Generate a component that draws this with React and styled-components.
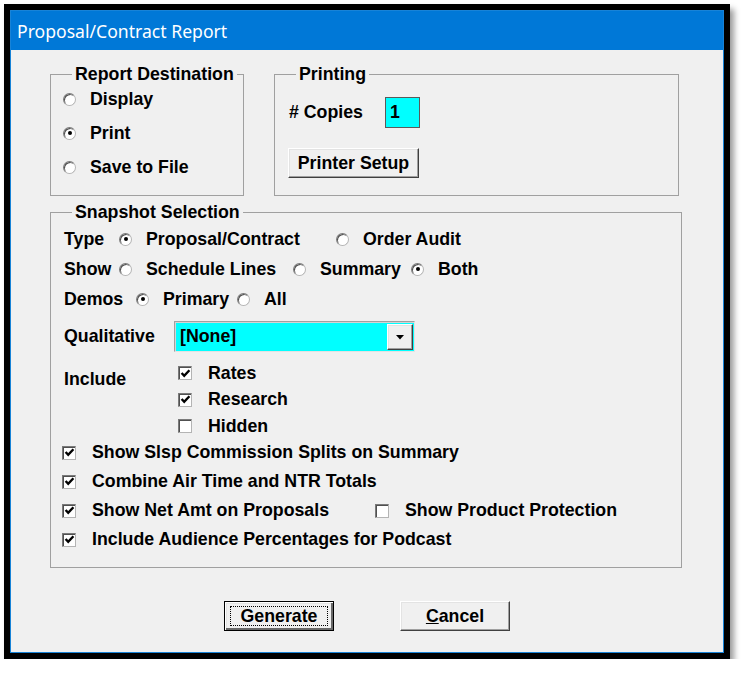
import React from 'react';
import styled, { createGlobalStyle, css } from 'styled-components';

const GlobalStyle = createGlobalStyle`
  body {
    margin: 0;
    background: #fff;
    font-family: "Liberation Sans", Arial, sans-serif;
  }
`;

const raised = css`
  box-sizing: border-box;
  background: #f0f0f0;
  border: 1px solid;
  border-color: #fff #404040 #404040 #fff;
  box-shadow: inset -1px -1px 0 #a0a0a0, inset 1px 1px 0 #e3e3e3;
`;

const sunken = css`
  box-sizing: border-box;
  border: 1px solid;
  border-color: #7a7a7a #b4b4b4 #b4b4b4 #7a7a7a;
  box-shadow: inset 1px 1px 0 #505050;
`;

export default function App () {
  return (
    <>
      <GlobalStyle />
      <Frame>
        <Window>
          <TitleBar>Proposal/Contract Report</TitleBar>
          <Content>
            <TopRow>
              <Group $width={194}>
                <Legend>Report Destination</Legend>
                <Stack $gap={4}>
                  <RadioOption label="Display" />
                  <RadioOption label="Print" checked />
                  <RadioOption label="Save to File" />
                </Stack>
              </Group>
              <Group $width={405}>
                <Legend>Printing</Legend>
                <CopiesRow>
                  <Label $width={98}>#&nbsp;Copies</Label>
                  <CopiesBox>1</CopiesBox>
                </CopiesRow>
                <PrinterButton>Printer Setup</PrinterButton>
              </Group>
            </TopRow>

            <Snapshot $width={632}>
              <Legend $offset={10}>Snapshot Selection</Legend>
              <Row $h={30} $top={2}>
                <Label $width={57}>Type</Label>
                <RadioOption label="Proposal/Contract" checked width={217} />
                <RadioOption label="Order Audit" />
              </Row>
              <Row $h={30}>
                <Label $width={57}>Show</Label>
                <RadioOption label="Schedule Lines" width={174} />
                <RadioOption label="Summary" width={118} />
                <RadioOption label="Both" checked />
              </Row>
              <Row $h={30}>
                <Label $width={74}>Demos</Label>
                <RadioOption label="Primary" checked width={101} />
                <RadioOption label="All" />
              </Row>
              <Row $h={31} $top={7}>
                <Label $width={112}>Qualitative</Label>
                <Combo>
                  <ComboText>[None]</ComboText>
                  <ComboButton>
                    <svg width="8" height="5" viewBox="0 0 8 5">
                      <polygon points="0,0 8,0 4,4.5" fill="#000" />
                    </svg>
                  </ComboButton>
                </Combo>
              </Row>
              <IncludeRow>
                <IncludeLabel>Include</IncludeLabel>
                <div>
                  <Row $h={26.5}><CheckOption label="Rates" checked /></Row>
                  <Row $h={26.5}><CheckOption label="Research" checked /></Row>
                  <Row $h={26.5}><CheckOption label="Hidden" /></Row>
                </div>
              </IncludeRow>
              <Row $h={29} $top={-1.5}>
                <CheckOption label="Show Slsp Commission Splits on Summary" checked />
              </Row>
              <Row $h={29}>
                <CheckOption label="Combine Air Time and NTR Totals" checked />
              </Row>
              <Row $h={29}>
                <CheckOption label="Show Net Amt on Proposals" checked width={313} />
                <CheckOption label="Show Product Protection" />
              </Row>
              <Row $h={29}>
                <CheckOption label="Include Audience Percentages for Podcast" checked />
              </Row>
            </Snapshot>

            <ButtonBar>
              <DialogButton $default>
                <FocusRing>Generate</FocusRing>
              </DialogButton>
              <DialogButton>
                <span><u>C</u>ancel</span>
              </DialogButton>
            </ButtonBar>
          </Content>
        </Window>
      </Frame>
    </>
  );
}

function RadioOption ({ label, checked, width }) {
  return (
    <Option $width={width}>
      <Radio $checked={checked} />
      <span>{label}</span>
    </Option>
  );
}

function CheckOption ({ label, checked, width }) {
  return (
    <Option $width={width} $gap={16}>
      <Check>
        {checked && (
          <svg width="11" height="11" viewBox="0 0 11 11">
            <path d="M1.6 5 L4.2 7.8 L9.4 2.2" stroke="#000" strokeWidth="2.4" fill="none" />
          </svg>
        )}
      </Check>
      <span>{label}</span>
    </Option>
  );
}

const Frame = styled.div`
  margin: 4px 0 0 4px;
  width: 726px;
  height: 655px;
  box-sizing: border-box;
  padding: 6px;
  background: #000;
  box-shadow: 4px 5px 6px rgba(0, 0, 0, 0.4);
`;

const Window = styled.div`
  height: 100%;
  box-sizing: border-box;
  border: 1px solid #1883d7;
  background: #f0f0f0;
  display: flex;
  flex-direction: column;
`;

const TitleBar = styled.div`
  height: 39px;
  flex: none;
  background: #0078d7;
  color: #fff;
  font-family: "Noto Sans", "Open Sans", sans-serif;
  font-size: 17.6px;
  display: flex;
  align-items: center;
  padding-left: 6px;
`;

const Content = styled.div`
  padding: 14px 0 0 39px;
  font-size: 17.75px;
  font-weight: bold;
  color: #000;
`;

const TopRow = styled.div`
  display: flex;
  gap: 30px;
  align-items: stretch;
`;

const Group = styled.fieldset`
  margin: 0;
  width: ${p => p.$width}px;
  box-sizing: border-box;
  padding: 0 12px 12px 12px;
  border: 1px solid #a0a0a0;
  min-inline-size: 0;
`;

const Snapshot = styled(Group)`
  margin-top: 6px;
  padding: 0 11px 13px 11px;
`;

const Legend = styled.legend`
  margin-left: ${p => p.$offset ?? 9}px;
  padding: 0 3px;
  line-height: 20px;
  white-space: nowrap;
`;

const Stack = styled.div`
  display: flex;
  flex-direction: column;
  gap: ${p => p.$gap}px;
`;

const Option = styled.label`
  display: flex;
  align-items: center;
  gap: ${p => p.$gap ?? 14}px;
  height: 30px;
  white-space: nowrap;
  flex: none;
  margin-right: ${p => (p.$width ? 0 : 13)}px;
  width: ${p => (p.$width ? `${p.$width}px` : 'auto')};
`;

const Radio = styled.span`
  ${sunken};
  width: 13px;
  height: 13px;
  min-width: 13px;
  border-radius: 50%;
  background: #fff;
  flex: none;
  display: flex;
  align-items: center;
  justify-content: center;

  &::after {
    content: '';
    display: ${p => (p.$checked ? 'block' : 'none')};
    width: 4px;
    height: 4px;
    border-radius: 50%;
    background: #000;
  }
`;

const Check = styled.span`
  ${sunken};
  width: 14px;
  height: 14px;
  min-width: 14px;
  background: #fff;
  flex: none;
  display: flex;
  align-items: center;
  justify-content: center;
`;

const Label = styled.span`
  width: ${p => p.$width}px;
  flex: none;
  white-space: nowrap;
  padding-left: 2px;
  box-sizing: border-box;
`;

const Row = styled.div`
  display: flex;
  align-items: center;
  height: ${p => p.$h}px;
  margin-top: ${p => p.$top ?? 0}px;
`;

const CopiesRow = styled.div`
  display: flex;
  align-items: center;
  margin-top: 13px;
`;

const CopiesBox = styled.div`
  width: 35px;
  height: 31px;
  box-sizing: border-box;
  border: 1px solid #5a5a5a;
  background: #00ffff;
  padding: 4px 0 0 4px;
  line-height: 20px;
`;

const PrinterButton = styled.div`
  ${raised};
  margin: 20px 0 5px 1px;
  width: 131px;
  height: 30px;
  display: flex;
  align-items: center;
  justify-content: center;
`;

const Combo = styled.div`
  ${sunken};
  border-color: #a0a0a0 #e3e3e3 #e3e3e3 #a0a0a0;
  box-shadow: inset 1px 1px 0 #d4d4d4;
  width: 241px;
  height: 31px;
  background: #00ffff;
  display: flex;
  align-items: center;
  padding: 0 1px 0 5px;
`;

const ComboText = styled.span`
  flex: 1;
`;

const ComboButton = styled.div`
  ${raised};
  width: 26px;
  height: 26px;
  display: flex;
  align-items: center;
  justify-content: center;
  padding-top: 1px;
`;

const IncludeRow = styled.div`
  display: flex;
  margin-top: 8px;
`;

const IncludeLabel = styled.span`
  width: 116px;
  flex: none;
  padding: 6px 0 0 2px;
  box-sizing: border-box;
  line-height: 26px;
`;

const ButtonBar = styled.div`
  display: flex;
  justify-content: center;
  gap: 66px;
  margin: 33px 39px 0 0;
`;

const DialogButton = styled.div`
  ${raised};
  width: 110px;
  height: 30px;
  display: flex;
  align-items: center;
  justify-content: center;
  ${p => p.$default && css`
    border: 1px solid #000;
    box-shadow: inset 1px 1px 0 #fff, inset -2px -2px 0 #696969, inset 2px 2px 0 #e3e3e3;
  `}
`;

const FocusRing = styled.span`
  border: 1px dotted #000;
  padding: 0 10px;
  line-height: 18px;
`;
